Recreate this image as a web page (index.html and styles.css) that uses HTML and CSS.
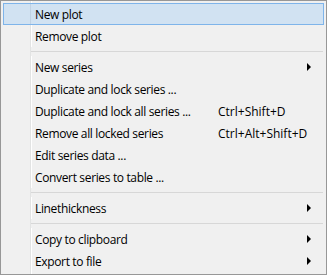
FILE: index.html
```html
<!DOCTYPE html>
<html lang="en">
<head>
    <meta charset="UTF-8">
    <title>Plot menu</title>
    <link rel="stylesheet" href="styles.css">
</head>
<body>

<div class="menu">
    <div class="item active"><span class="label">New plot</span></div>
    <div class="item"><span class="label">Remove plot</span></div>
    <div class="sep"></div>
    <div class="item"><span class="label">New series</span><span class="key"></span><span class="arrow"></span></div>
    <div class="item"><span class="label">Duplicate and lock series ...</span></div>
    <div class="item"><span class="label">Duplicate and lock all series ...</span><span class="key">Ctrl+Shift+D</span></div>
    <div class="item"><span class="label">Remove all locked series</span><span class="key">Ctrl+Alt+Shift+D</span></div>
    <div class="item"><span class="label">Edit series data ...</span></div>
    <div class="item"><span class="label">Convert series to table ...</span></div>
    <div class="sep"></div>
    <div class="item"><span class="label">Linethickness</span><span class="key"></span><span class="arrow"></span></div>
    <div class="sep"></div>
    <div class="item"><span class="label">Copy to clipboard</span><span class="key"></span><span class="arrow"></span></div>
    <div class="item"><span class="label">Export to file</span><span class="key"></span><span class="arrow"></span></div>
</div>

</body>
</html>
```

FILE: styles.css
```css
body {
    margin: 0;
    font-family: "Open Sans", "Noto Sans", sans-serif;
    font-size: 12px;
    color: #000;
}
.menu {
    width: 327px;
    height: 275px;
    box-sizing: border-box;
    border: 1px solid #979797;
    padding: 2px;
    background: #f0f0f0 linear-gradient(to right, transparent 29px, #e2e3e3 29px, #e2e3e3 30px, #fff 30px, #fff 31px, transparent 31px);
}
.item {
    display: grid;
    grid-template-columns: 183px 1fr 16px;
    align-items: center;
    height: 22px;
    box-sizing: border-box;
    padding-left: 31px;
    border: 1px solid transparent;
    white-space: nowrap;
}
.item.active {
    background: #d1e2f2 linear-gradient(to right, transparent 26px, #c0d2e4 26px, #c0d2e4 27px, transparent 27px);
    border-color: #7eb4ea;
}
.label {
    letter-spacing: -0.35px;
}
.arrow {
    width: 0;
    height: 0;
    border-left: 4px solid #000;
    border-top: 4px solid transparent;
    border-bottom: 4px solid transparent;
}
.sep {
    height: 9px;
    margin-left: 28px;
    margin-right: 1px;
    background: linear-gradient(#f0f0f0 4px, #d7d7d7 4px, #d7d7d7 5px, #f0f0f0 5px);
}
```
